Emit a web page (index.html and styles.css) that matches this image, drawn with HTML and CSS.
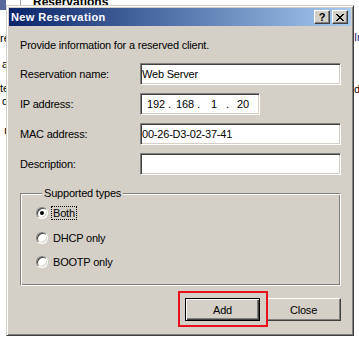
FILE: index.html
```html
<!DOCTYPE html>
<html lang="en">
<head>
  <meta charset="UTF-8" />
  <title>New Reservation</title>
  <link rel="stylesheet" href="styles.css">
</head>
<body>

  <div class="behind">
    <div class="behind-top">
      <span class="tree-icon"></span>
      <span class="tree-line"></span>
      <span class="behind-title">Reservations</span>
    </div>
    <div class="strip strip-left">
      <div class="frag">re</div>
      <div class="frag f2">a</div>
      <div class="frag f3">te</div>
      <div class="frag">d</div>
      <div class="frag f5">r</div>
    </div>
    <div class="strip-mid"></div>
    <div class="strip strip-right">
      <div class="frag blue">Ir</div>
      <div class="frag r2">d</div>
    </div>
  </div>

  <div class="dialog">
    <div class="titlebar">
      <span class="title">New Reservation</span>
      <span class="tbtn help">?</span>
      <span class="tbtn">
        <svg width="8" height="7" viewBox="0 0 8 7" shape-rendering="crispEdges">
          <path d="M0 0h2v1H0z M6 0h2v1H6z M1 1h2v1H1z M5 1h2v1H5z M2 2h4v1H2z M3 3h2v1H3z M2 4h4v1H2z M1 5h2v1H1z M5 5h2v1H5z M0 6h2v1H0z M6 6h2v1H6z" fill="#000"/>
        </svg>
      </span>
    </div>

    <div class="content">
      <p class="intro">Provide information for a reserved client.</p>

      <div class="row">
        <label for="resName">Reservation name:</label>
        <input type="text" id="resName" class="box" value="Web Server">
      </div>

      <div class="row">
        <label>IP address:</label>
        <div class="box ip">
          <span class="oct">192</span><span class="sep">.</span>
          <span class="oct">168</span><span class="sep">.</span>
          <span class="oct">1</span><span class="sep">.</span>
          <span class="oct">20</span>
        </div>
      </div>

      <div class="row">
        <label for="mac">MAC address:</label>
        <input type="text" id="mac" class="box" value="00-26-D3-02-37-41">
      </div>

      <div class="row last">
        <label for="desc">Description:</label>
        <input type="text" id="desc" class="box" value="">
      </div>

      <fieldset class="group">
        <legend>Supported types</legend>
        <div class="radio">
          <span class="dot on"></span>
          <span class="rlabel focus">Both</span>
        </div>
        <div class="radio">
          <span class="dot"></span>
          <span class="rlabel">DHCP only</span>
        </div>
        <div class="radio">
          <span class="dot"></span>
          <span class="rlabel">BOOTP only</span>
        </div>
      </fieldset>

      <div class="buttons">
        <div class="add-wrap">
          <button class="btn default">Add</button>
          <span class="mark"></span>
        </div>
        <button class="btn">Close</button>
      </div>
    </div>
  </div>

</body>
</html>
```

FILE: styles.css
```css
body {
  margin: 0;
  background: #fff;
  font-family: "Liberation Sans", Arial, sans-serif;
  font-size: 11px;
  color: #000;
  overflow: hidden;
}

/* window behind the dialog */
.behind {
  display: grid;
  grid-template-columns: 8px 1fr 5px;
  grid-template-rows: 11px auto;
  height: 343px;
}

.behind-top {
  grid-column: 1 / 4;
  display: flex;
  align-items: flex-start;
  overflow: hidden;
}

.tree-icon {
  width: 6px;
  height: 10px;
  background: #56699a;
}

.tree-line {
  width: 1px;
  height: 7px;
  margin-left: 14px;
  background: #a0a0a0;
}

.behind-title {
  margin-left: 12px;
  margin-top: -5px;
  font-size: 12px;
  font-weight: bold;
  line-height: 14px;
}

.strip {
  overflow: hidden;
  line-height: 13px;
  white-space: nowrap;
}

.strip-left {
  text-align: right;
  padding-top: 20.5px;
}

.strip-left .f2 { margin-top: 13px; }
.strip-left .f3 { margin-top: 11px; }
.strip-left .f5 { margin-top: 16px; }

.strip-right {
  padding-top: 19.5px;
}

.strip-right .r2 { margin-top: 39.5px; }

.blue {
  color: #1a2c70;
}

/* dialog */
.dialog {
  position: absolute;
  left: 6px;
  top: 5px;
  width: 348px;
  height: 331px;
  box-sizing: border-box;
  padding: 2px;
  background: #d4d0c8;
  border: 1px solid;
  border-color: #d4d0c8 #404040 #404040 #d4d0c8;
  box-shadow: inset 1px 1px #fff, inset -1px -1px #808080;
}

.titlebar {
  height: 18px;
  display: flex;
  align-items: center;
  padding: 0 3px 0 2px;
  background: linear-gradient(to right, #0a246a, #a6caf0);
}

.title {
  flex: 1;
  color: #fff;
  font-weight: bold;
  letter-spacing: 0.4px;
}

.tbtn {
  width: 16px;
  height: 14px;
  box-sizing: border-box;
  display: flex;
  align-items: center;
  justify-content: center;
  background: #d4d0c8;
  border: 1px solid;
  border-color: #fff #404040 #404040 #fff;
  box-shadow: inset -1px -1px #808080;
}

.tbtn + .tbtn {
  margin-left: 2px;
}

.help {
  font-weight: bold;
  font-size: 11px;
  line-height: 11px;
}

.content {
  padding: 13px 10px 0 11px;
  letter-spacing: -0.2px;
}

.intro {
  margin: 0 0 11px;
  line-height: 13px;
}

.row {
  display: flex;
  align-items: center;
  height: 22px;
  margin-bottom: 8px;
}

.row.last {
  margin-bottom: 0;
}

.row label {
  width: 120px;
}

.box {
  flex: 1;
  height: 22px;
  box-sizing: border-box;
  margin: 0;
  padding: 0 1px;
  background: #fff;
  border: 1px solid;
  border-color: #808080 #fff #fff #808080;
  box-shadow: inset 1px 1px #404040, inset -1px -1px #d4d0c8;
  font: 11px "Liberation Sans", Arial, sans-serif;
  letter-spacing: -0.2px;
  color: #000;
  outline: none;
}

.ip {
  flex: none;
  width: 120px;
  display: flex;
  align-items: center;
  padding-left: 3px;
}

.oct {
  width: 24px;
  text-align: center;
}

.sep {
  width: 5px;
}

/* group box */
.group {
  margin: 12px 0 0;
  padding: 6px 0 16px 15px;
  min-width: 0;
  border: 1px solid;
  border-color: #808080 #fff #fff #808080;
  box-shadow: inset 1px 1px #fff, inset -1px -1px #808080;
  display: flex;
  flex-direction: column;
  gap: 10.5px;
}

.group legend {
  margin-left: 6px;
  padding: 0 2px;
  line-height: 13px;
  background: #d4d0c8;
}

.radio {
  display: flex;
  align-items: center;
  height: 14px;
}

.dot {
  width: 12px;
  height: 12px;
  box-sizing: border-box;
  display: flex;
  align-items: center;
  justify-content: center;
  border-radius: 50%;
  background: #fff;
  border: 1px solid;
  border-color: #808080 #fff #fff #808080;
  box-shadow: inset 1px 1px #404040, inset -1px -1px #d4d0c8;
}

.dot.on::after {
  content: "";
  width: 4px;
  height: 4px;
  border-radius: 50%;
  background: #000;
}

.rlabel {
  margin-left: 5px;
  line-height: 12px;
}

.rlabel.focus {
  margin-left: 3px;
  padding: 0 1px;
  border: 1px dotted #000;
}

/* buttons */
.buttons {
  display: flex;
  justify-content: flex-end;
  gap: 6px;
  margin-top: 12px;
}

.btn {
  width: 75px;
  height: 23px;
  box-sizing: border-box;
  padding: 0;
  background: #d4d0c8;
  border: 1px solid;
  border-color: #fff #404040 #404040 #fff;
  box-shadow: inset -1px -1px #808080, inset 1px 1px #d4d0c8;
  font: 11px "Liberation Sans", Arial, sans-serif;
  letter-spacing: -0.2px;
  color: #000;
}

.btn.default {
  border-color: #000;
  box-shadow: inset 1px 1px #fff, inset -1px -1px #404040, inset -2px -2px #808080;
}

.add-wrap {
  position: relative;
  display: flex;
}

/* red highlight drawn over the screenshot */
.mark {
  position: absolute;
  top: -7px;
  right: -8px;
  bottom: -6px;
  left: -7px;
  border: 2px solid #e8101a;
  pointer-events: none;
}
```
